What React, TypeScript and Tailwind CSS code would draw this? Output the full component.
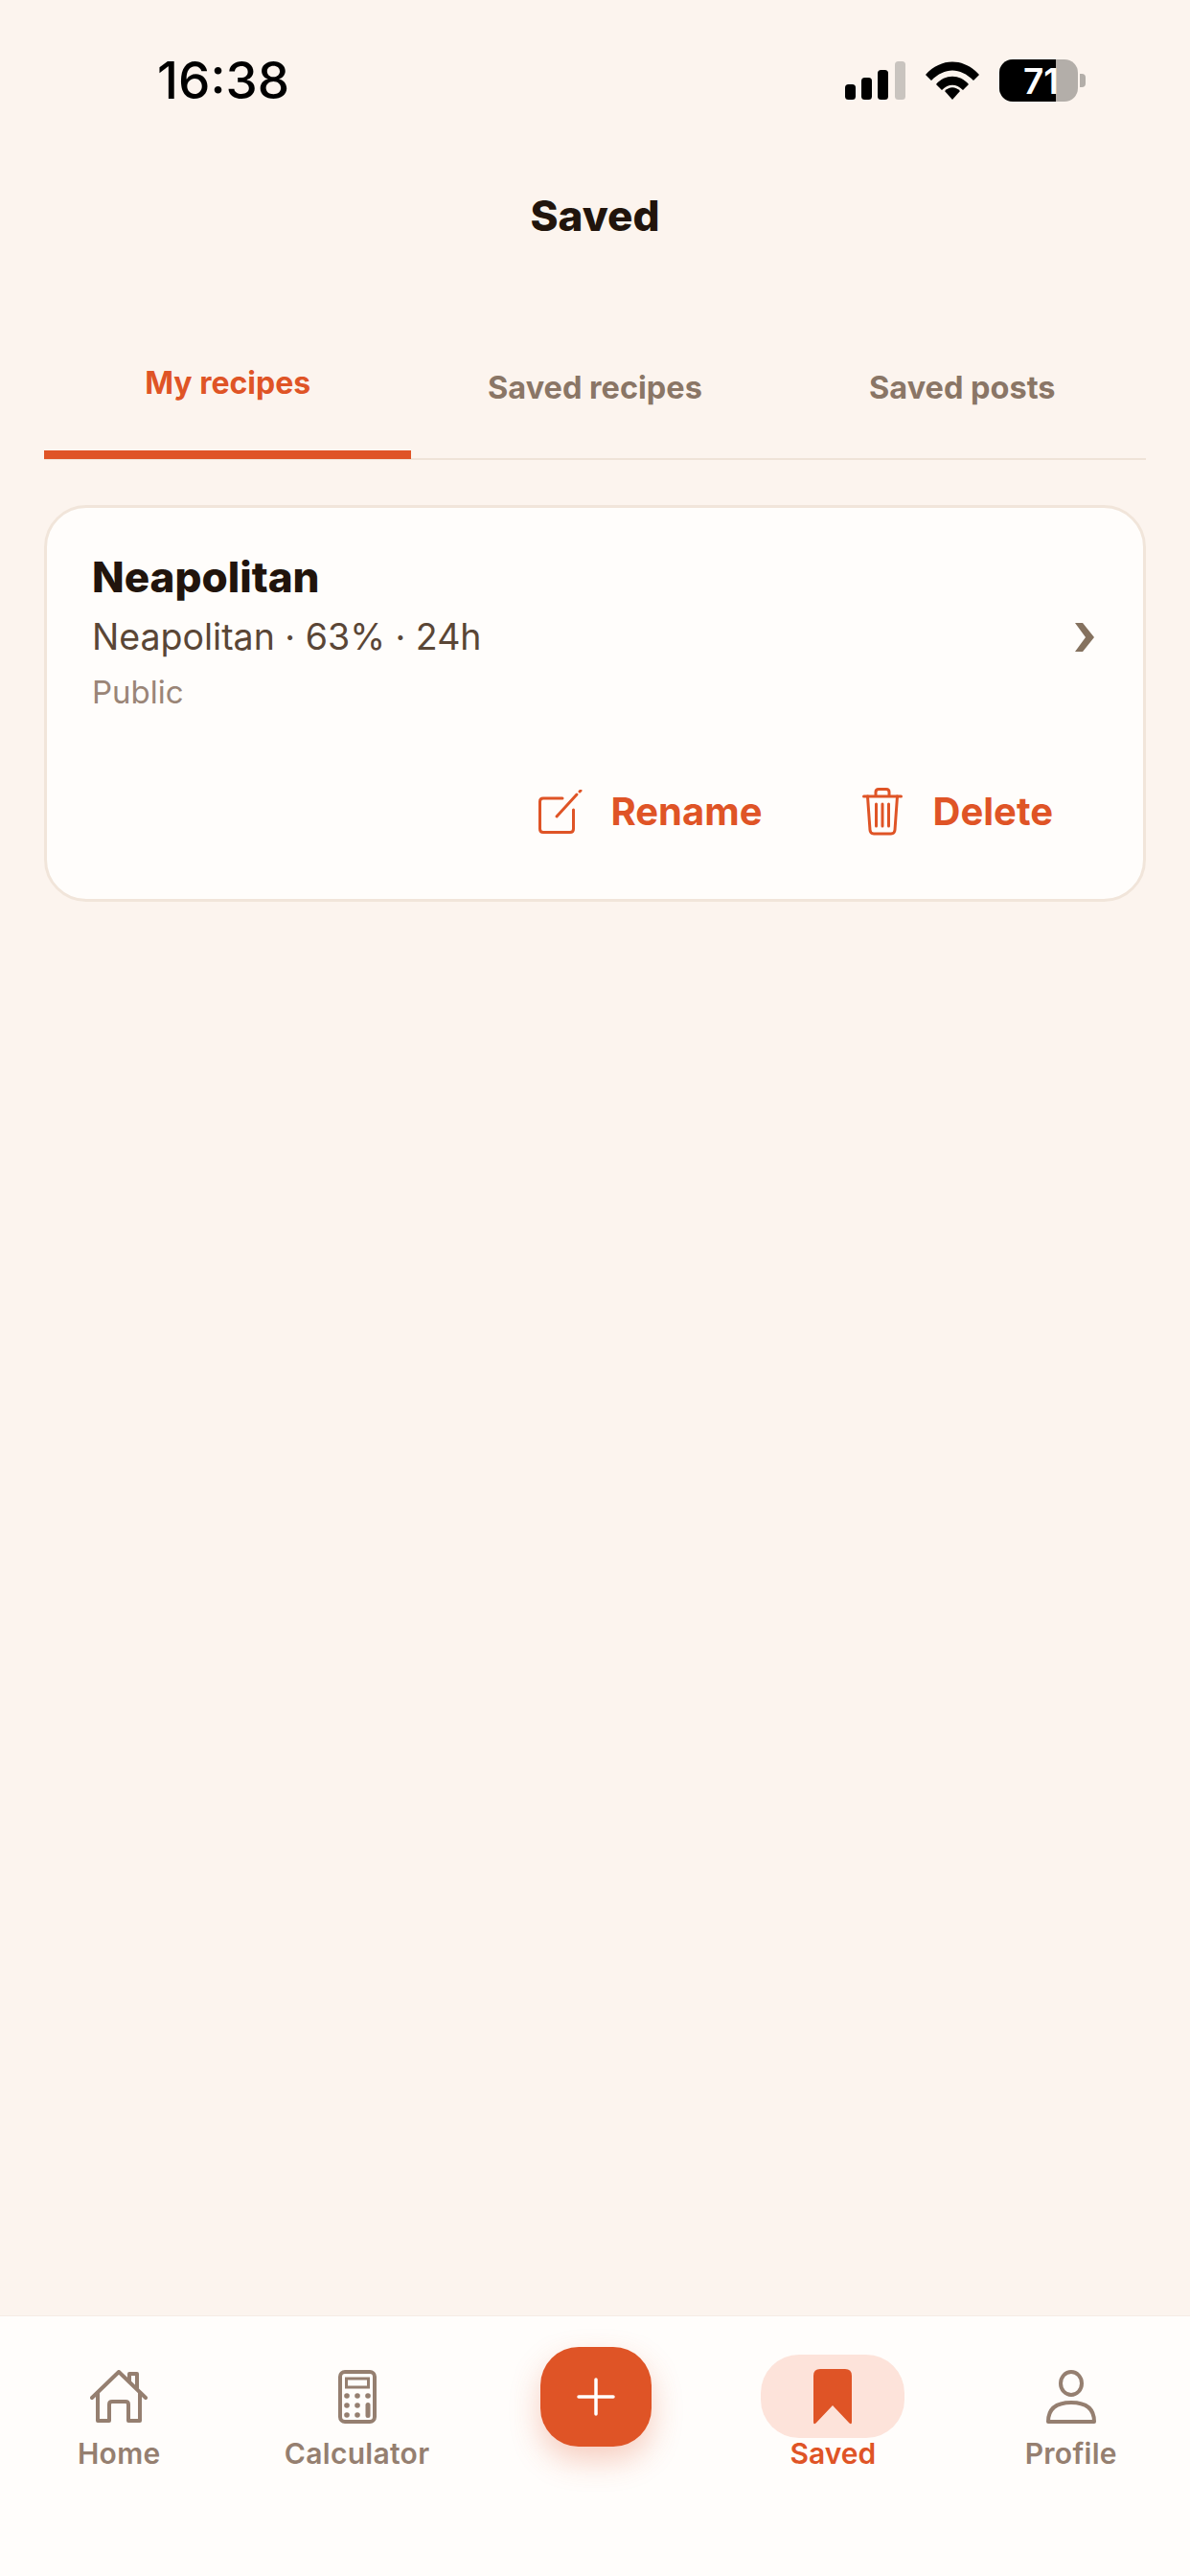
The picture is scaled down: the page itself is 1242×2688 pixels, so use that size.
import React from "react";

const font = "font-['Inter',sans-serif]";

const StatusIcons = () => (
  <div className="flex items-center gap-[21px]">
    <svg width="63" height="40" viewBox="0 0 63 40">
      <rect x="0" y="24" width="11" height="16" rx="3.5" fill="#000" />
      <rect x="17" y="17" width="11" height="23" rx="3.5" fill="#000" />
      <rect x="34" y="9" width="11" height="31" rx="3.5" fill="#000" />
      <rect x="52" y="0" width="11" height="40" rx="3.5" fill="#c9c4bf" />
    </svg>
    <svg width="56" height="40" viewBox="0 0 56 40">
      <path d="M0 14 C16 -4 40 -4 56 14 L50 20 C36 6 20 6 6 20 Z" fill="#000" />
      <path d="M11 24 C20 13 36 13 45 24 L39 30 C32 23 24 23 17 30 Z" fill="#000" />
      <path d="M20 31 C25 26 31 26 36 31 L28 40 Z" fill="#000" />
    </svg>
    <div className="flex items-center gap-[2px]">
      <div className="relative h-[44px] w-[82px] overflow-hidden rounded-[14px] bg-[#b3aea9]">
        <div className="flex h-full w-[59px] items-center justify-end bg-black">
          <span className={`${font} text-[37px] leading-none font-semibold whitespace-nowrap text-white -mr-[3px]`}>71</span>
        </div>
      </div>
      <div className="h-[14px] w-[6px] rounded-r-[4px] bg-[#b3aea9]" />
    </div>
  </div>
);

const EditIcon = () => (
  <svg width="46" height="46" viewBox="0 0 46 46" fill="none" stroke="#df5426" strokeWidth="3" strokeLinecap="round" strokeLinejoin="round">
    <path d="M25 9 H5 Q1.5 9 1.5 12.5 V41 Q1.5 44.500 5 44.500 H33 Q36.500 44.500 36.500 41 V21" />
    <path d="M19 28 L40 5" />
    <path d="M43 2 L44 1" />
  </svg>
);

const TrashIcon = () => (
  <svg width="42" height="50" viewBox="0 0 42 50" fill="none" stroke="#df5426" strokeWidth="3" strokeLinecap="round" strokeLinejoin="round">
    <path d="M1.500 9 H40.500" />
    <path d="M14 8 V4.500 Q14 1.500 17 1.500 H25 Q28 1.500 28 4.500 V8" />
    <path d="M5.500 9 L8 44 Q8.300 48 12 48 H30 Q33.700 48 34 44 L36.500 9" />
    <path d="M14.500 17 V40 M21 17 V40 M27.500 17 V40" />
  </svg>
);

const HomeIcon = () => (
  <svg width="60" height="56" viewBox="0 0 60 56" fill="none" stroke="#957f70" strokeWidth="4" strokeLinecap="round" strokeLinejoin="round">
    <path d="M2 29 L30 2 L58 29" />
    <path d="M41 11 V4 H49 V19" />
    <path d="M8 24 V53 H20 V36 Q20 33 23 33 H37 Q40 33 40 36 V53 H52 V24" />
  </svg>
);

const CalculatorIcon = () => (
  <svg width="40" height="56" viewBox="0 0 40 56" fill="none">
    <rect x="2" y="2" width="36" height="52" rx="5" stroke="#957f70" strokeWidth="4" />
    <rect x="8.500" y="9" width="23" height="9" stroke="#957f70" strokeWidth="3" />
    <g fill="#957f70">
      <circle cx="9" cy="27" r="2.800" />
      <circle cx="20" cy="27" r="2.800" />
      <circle cx="31" cy="27" r="2.800" />
      <circle cx="9" cy="37" r="2.800" />
      <circle cx="20" cy="37" r="2.800" />
      <circle cx="9" cy="47" r="2.800" />
      <circle cx="20" cy="47" r="2.800" />
      <rect x="28.500" y="34" width="5" height="16" rx="2.500" />
    </g>
  </svg>
);

const BookmarkIcon = () => (
  <svg width="40" height="58" viewBox="0 0 40 58">
    <path d="M0 7 Q0 0 7 0 H33 Q40 0 40 7 V55 Q40 59 37 56 L20 38 L3 56 Q0 59 0 55 Z" fill="#df5426" />
  </svg>
);

const ProfileIcon = () => (
  <svg width="54" height="56" viewBox="0 0 54 56" fill="none" stroke="#957f70" strokeWidth="4" strokeLinecap="round" strokeLinejoin="round">
    <ellipse cx="27" cy="14" rx="11" ry="12" />
    <path d="M3 54 Q3 34 27 34 Q51 34 51 54 Z" />
  </svg>
);

const NavItem = ({ icon, label }: { icon: React.ReactNode; label: string }) => (
  <div className="flex flex-col items-center">
    <div className="flex h-[56px] items-center justify-center">{icon}</div>
    <span className={`${font} mt-[14px] text-[30px] leading-[34px] font-semibold tracking-[0.3px] text-[#957f70]`}>{label}</span>
  </div>
);

export default function App() {
  return (
    <div className={`${font} flex h-[2688px] w-[1242px] flex-col overflow-hidden bg-[#fcf4ee]`}>
      {/* status bar */}
      <div className="flex items-center justify-between pt-[61px] pr-[109px] pl-[164px]">
        <span className="text-[53px] leading-[46px] font-medium text-black">16:38</span>
        <StatusIcons />
      </div>

      <h1 className="mt-[95px] text-center text-[44px] leading-[46px] font-extrabold text-[#21140c]">Saved</h1>

      {/* tabs */}
      <div className="mx-[46px] mt-[118px] flex border-b-2 border-[#efe3d8]">
        <div className="flex h-[113px] flex-1 justify-center border-b-[9px] border-[#df5426] -mb-[2px]">
          <span className="mt-[15px] text-[32px] leading-[38px] font-bold text-[#df5426]">My recipes</span>
        </div>
        <div className="flex h-[112px] flex-1 justify-center">
          <span className="mt-[20px] text-[32.500px] leading-[38px] font-bold text-[#8a7666]">Saved recipes</span>
        </div>
        <div className="flex h-[112px] flex-1 justify-center">
          <span className="mt-[20px] text-[32.500px] leading-[38px] font-bold text-[#8a7666]">Saved posts</span>
        </div>
      </div>

      {/* recipe card */}
      <div className="mx-[46px] mt-[47px] h-[414px] rounded-[44px] border-[3px] border-[#f1e5da] bg-[#fffdfb] pt-[47px] pr-[47px] pl-[47px]">
        <div className="flex items-center justify-between">
          <div>
            <div className="text-[44px] leading-[50px] font-extrabold text-[#21140c]">Neapolitan</div>
            <div className="mt-[16px] text-[37.500px] leading-[44px] text-[#5a4636]">Neapolitan · 63% · 24h</div>
            <div className="mt-[16px] text-[33px] leading-[38px] text-[#9a8577]">Public</div>
          </div>
          <svg className="mr-[3px] mt-[11px]" width="22" height="32" viewBox="0 0 22 32">
            <path d="M1 1 H9 L21 16 L9 31 H1 L12 16 Z" fill="#85725f" />
          </svg>
        </div>
        <div className="mt-[81px] flex items-center justify-end pr-[47px]">
          <div className="flex items-center gap-[29px]">
            <EditIcon />
            <span className="text-[40px] leading-[46px] font-bold text-[#df5426]">Rename</span>
          </div>
          <div className="ml-[104px] flex items-center gap-[32px]">
            <TrashIcon />
            <span className="text-[40px] leading-[46px] font-bold text-[#df5426]">Delete</span>
          </div>
        </div>
      </div>

      {/* bottom nav */}
      <div className="mt-auto grid h-[272px] grid-cols-5 border-t border-[#f6ece5] bg-[#fffdfb] pt-[56px]">
        <NavItem icon={<HomeIcon />} label="Home" />
        <NavItem icon={<CalculatorIcon />} label="Calculator" />
        <div className="flex justify-center">
          <div className="-mt-[24px] ml-[2px] flex h-[104px] w-[116px] items-center justify-center rounded-[40px] bg-[#df5426] shadow-[0_14px_32px_rgba(223,84,38,0.28)]">
            <svg width="40" height="40" viewBox="0 0 40 40" stroke="#fff" strokeWidth="3.500" strokeLinecap="round">
              <path d="M20 2 V38 M2 20 H38" />
            </svg>
          </div>
        </div>
        <div className="relative flex flex-col items-center">
          <div className="absolute -top-[16px] h-[87px] w-[150px] rounded-[40px] bg-[#fde3da]" />
          <div className="relative flex h-[56px] items-center justify-center"><BookmarkIcon /></div>
          <span className="relative mt-[14px] text-[30px] leading-[34px] font-semibold text-[#df5426]">Saved</span>
        </div>
        <NavItem icon={<ProfileIcon />} label="Profile" />
      </div>
    </div>
  );
}
